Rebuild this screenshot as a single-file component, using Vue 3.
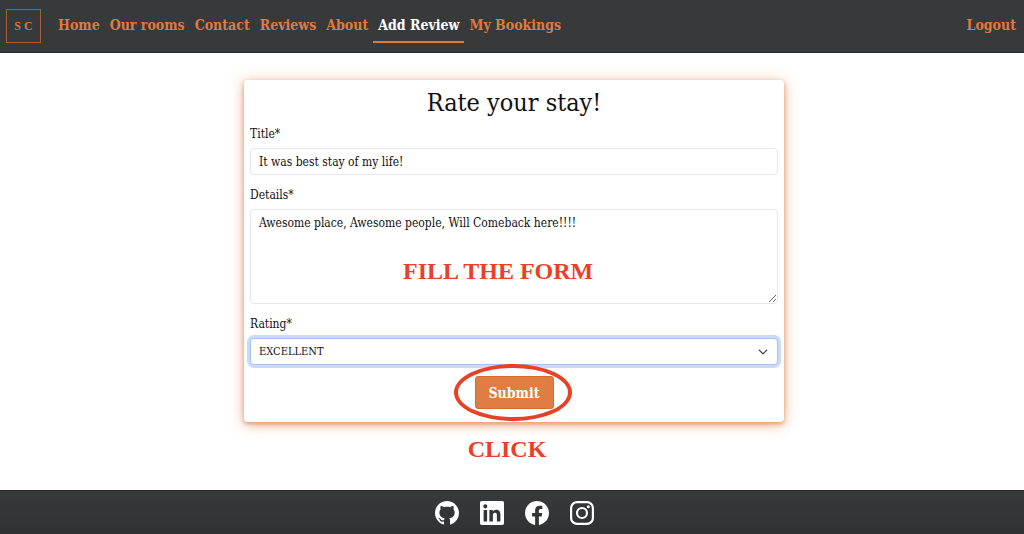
<script setup>
import { ref } from 'vue'

const links = ['Home', 'Our rooms', 'Contact', 'Reviews', 'About', 'Add Review', 'My Bookings']
const current = 'Add Review'

const title = ref('It was best stay of my life!')
const details = ref('Awesome place, Awesome people, Will Comeback here!!!!')
const rating = ref('EXCELLENT')
const ratings = ['EXCELLENT', 'GOOD', 'AVERAGE', 'POOR']
</script>

<template>
  <div class="page">
    <header class="navbar">
      <a class="logo" href="#">S C</a>
      <nav class="links">
        <a
          v-for="link in links"
          :key="link"
          href="#"
          class="link"
          :class="{ active: link === current }"
        >{{ link }}</a>
      </nav>
      <a class="link logout" href="#">Logout</a>
    </header>

    <main class="content">
      <form class="card" @submit.prevent>
        <h1>Rate your stay!</h1>
        <label for="title">Title*</label>
        <input id="title" v-model="title" class="field" type="text" />
        <label for="details">Details*</label>
        <div class="details">
          <textarea id="details" v-model="details" class="field"></textarea>
          <span class="note fill">FILL THE FORM</span>
        </div>
        <label for="rating">Rating*</label>
        <div class="select">
          <select id="rating" v-model="rating" class="field focused">
            <option v-for="r in ratings" :key="r">{{ r }}</option>
          </select>
          <svg class="chevron" viewBox="0 0 16 16" aria-hidden="true">
            <path d="M2 5l6 6 6-6" fill="none" stroke="#343a40" stroke-width="2" stroke-linecap="round" stroke-linejoin="round" />
          </svg>
        </div>
        <div class="actions">
          <button type="submit">Submit</button>
          <span class="ring"></span>
        </div>
      </form>
      <p class="note">CLICK</p>
    </main>

    <footer class="footer">
      <a href="#" aria-label="GitHub">
        <svg viewBox="0 0 16 16"><path fill="#fff" d="M8 0C3.58 0 0 3.58 0 8c0 3.54 2.29 6.53 5.47 7.59.4.07.55-.17.55-.38 0-.19-.01-.82-.01-1.49-2.01.37-2.53-.49-2.69-.94-.09-.23-.48-.94-.82-1.13-.28-.15-.68-.52-.01-.53.63-.01 1.08.58 1.23.82.72 1.21 1.87.87 2.33.66.07-.52.28-.87.51-1.07-1.78-.2-3.64-.89-3.64-3.95 0-.87.31-1.59.82-2.15-.08-.2-.36-1.02.08-2.12 0 0 .67-.21 2.2.82.64-.18 1.32-.27 2-.27s1.36.09 2 .27c1.53-1.04 2.2-.82 2.2-.82.44 1.1.16 1.92.08 2.12.51.56.82 1.27.82 2.15 0 3.07-1.87 3.75-3.65 3.95.29.25.54.73.54 1.48 0 1.07-.01 1.93-.01 2.2 0 .21.15.46.55.38A8.01 8.01 0 0 0 16 8c0-4.42-3.58-8-8-8" /></svg>
      </a>
      <a href="#" aria-label="LinkedIn">
        <svg viewBox="0 0 24 24"><path fill="#fff" d="M22.2 0H1.8C.8 0 0 .8 0 1.7v20.6c0 .9.8 1.7 1.8 1.7h20.4c1 0 1.8-.8 1.8-1.7V1.7C24 .8 23.2 0 22.2 0zM7.100 20.400H3.600V9h3.500v11.400zM5.300 7.400a2.050 2.050 0 1 1 0-4.100 2.050 2.050 0 0 1 0 4.100zm15.100 13h-3.500v-5.600c0-1.300 0-3-1.900-3s-2.100 1.400-2.100 2.900v5.700H9.400V9h3.400v1.600c.5-.9 1.600-1.900 3.400-1.900 3.600 0 4.200 2.400 4.200 5.500z" /></svg>
      </a>
      <a href="#" aria-label="Facebook">
        <svg viewBox="0 0 16 16"><path fill="#fff" d="M16 8.049c0-4.446-3.582-8.050-8-8.050C3.580 0-.002 3.603-.002 8.050c0 4.017 2.926 7.347 6.750 7.951v-5.625h-2.030V8.050H6.750V6.275c0-2.017 1.195-3.131 3.022-3.131.876 0 1.791.157 1.791.157v1.980h-1.009c-.993 0-1.303.621-1.303 1.258v1.510h2.218l-.354 2.326H9.250V16c3.824-.604 6.750-3.934 6.750-7.951" /></svg>
      </a>
      <a href="#" aria-label="Instagram">
        <svg viewBox="0 0 24 24" fill="none" stroke="#fff" stroke-width="2.200">
          <rect x="1.100" y="1.100" width="21.800" height="21.800" rx="6" />
          <circle cx="12" cy="12" r="5" />
          <circle cx="18.300" cy="5.700" r="1.500" fill="#fff" stroke="none" />
        </svg>
      </a>
    </footer>
  </div>
</template>

<style>
body {
  background: #fff;
}
</style>

<style scoped>
.page {
  display: flex;
  flex-direction: column;
  min-height: 100vh;
  font-family: "DejaVu Serif Condensed", "DejaVu Serif", serif;
  color: #111;
}
.page * {
  box-sizing: border-box;
}
.navbar {
  display: flex;
  align-items: center;
  height: 53px;
  padding: 0 3px 0 6px;
  background: #38393b;
  border-bottom: 1px solid #29292b;
}
.logo {
  display: flex;
  align-items: center;
  justify-content: center;
  width: 35px;
  height: 34px;
  margin-right: 12px;
  border: 1px solid #a85d38;
  color: #d9773f;
  font: 700 12px "Liberation Serif", serif;
  text-decoration: none;
}
.links {
  display: flex;
  flex: 1;
}
.link {
  padding: 0 5px;
  border-bottom: 2px solid transparent;
  color: #de7b42;
  font-size: 14px;
  font-weight: 700;
  line-height: 31px;
  text-decoration: none;
  white-space: nowrap;
}
.active {
  color: #fff;
  border-color: #de7b42;
}
.content {
  display: flex;
  flex: 1;
  flex-direction: column;
  align-items: center;
  padding: 27px 0 0 4px;
}
.card {
  display: flex;
  flex-direction: column;
  width: 100%;
  max-width: 540px;
  padding: 6px 6px 13px;
  border-radius: 4px;
  background: #fff;
  box-shadow: 0 2px 4px rgba(222, 123, 66, 0.6), 0 2px 14px rgba(222, 123, 66, 0.6);
}
h1 {
  margin: 0;
  font-size: 25px;
  font-weight: 400;
  line-height: 34px;
  text-align: center;
}
label {
  font-size: 12px;
  line-height: 28px;
}
.field {
  display: block;
  width: 100%;
  height: 27px;
  margin: 0 0 6px;
  padding: 0 8px;
  border: 1px solid #e4e6e8;
  border-radius: 4px;
  background: #fff;
  color: #111;
  font-family: inherit;
  font-size: 12px;
  outline: none;
}
.details,
.select,
.actions {
  position: relative;
}
textarea.field {
  height: 95px;
  padding: 5px 8px;
  line-height: 16px;
  resize: vertical;
}
.focused {
  appearance: none;
  margin: 0;
  border-color: #a9c1f5;
  box-shadow: 0 0 0 3px #cbdafa;
  font-size: 11px;
}
.chevron {
  position: absolute;
  top: 9px;
  right: 10px;
  width: 10px;
  height: 10px;
  pointer-events: none;
}
.note {
  margin: 0;
  color: #ea4025;
  font: 700 24px/28px "Liberation Serif", serif;
}
.fill {
  position: absolute;
  top: 48px;
  left: 0;
  width: 94%;
  text-align: center;
  pointer-events: none;
}
p.note {
  margin: 13px 14px 0 0;
}
.actions {
  display: flex;
  justify-content: center;
  margin-top: 11px;
}
button {
  height: 33px;
  padding: 0 13px;
  border: 1px solid #d9692c;
  border-radius: 3px;
  background: #df7d43;
  color: #fff;
  font-family: inherit;
  font-size: 14px;
  font-weight: 700;
}
.ring {
  position: absolute;
  top: -12px;
  left: 50%;
  width: 118px;
  height: 57px;
  margin-left: -60px;
  border: 4px solid #ea4025;
  border-radius: 50%;
  pointer-events: none;
}
.footer {
  display: flex;
  align-items: center;
  justify-content: center;
  gap: 21px;
  height: 44px;
  padding-left: 4px;
  background: linear-gradient(#38393b, #303132);
  border-top: 1px solid #29292b;
}
.footer a,
.footer svg {
  display: block;
  width: 24px;
  height: 24px;
}
</style>
